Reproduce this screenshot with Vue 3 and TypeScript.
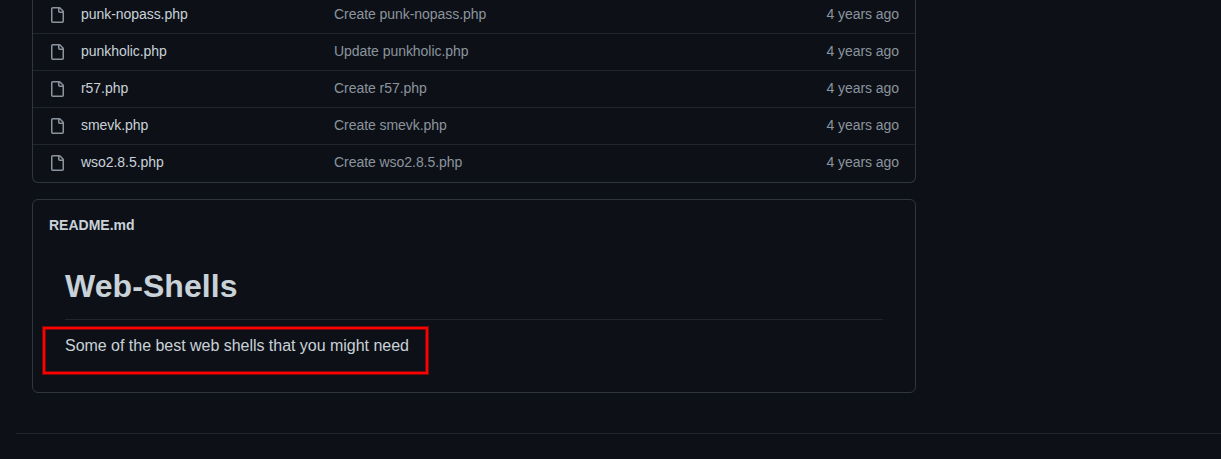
<script setup lang="ts">
interface FileRow {
  name: string
  message: string
  age: string
}

const files: FileRow[] = [
  { name: 'punk-nopass.php', message: 'Create punk-nopass.php', age: '4 years ago' },
  { name: 'punkholic.php', message: 'Update punkholic.php', age: '4 years ago' },
  { name: 'r57.php', message: 'Create r57.php', age: '4 years ago' },
  { name: 'smevk.php', message: 'Create smevk.php', age: '4 years ago' },
  { name: 'wso2.8.5.php', message: 'Create wso2.8.5.php', age: '4 years ago' },
]
</script>

<template>
  <div class="page">
    <main class="content">
      <section class="files">
        <div v-for="file in files" :key="file.name" class="row">
          <svg class="icon" viewBox="0 0 16 16" width="16" height="16" aria-hidden="true">
            <path
              fill-rule="evenodd"
              d="M3.75 1.5a.25.25 0 00-.25.25v12.5c0 .138.112.25.25.25h9.5a.25.25 0 00.25-.25V6h-2.75A1.75 1.75 0 019 4.25V1.5H3.75zm6.75.062V4.25c0 .138.112.25.25.25h2.688a.252.252 0 00-.011-.013l-2.914-2.914a.272.272 0 00-.013-.011zM2 1.75C2 .784 2.784 0 3.75 0h6.586c.464 0 .909.184 1.237.513l2.914 2.914c.329.328.513.773.513 1.237v9.586A1.75 1.75 0 0113.25 16h-9.5A1.75 1.75 0 012 14.25V1.75z"
            />
          </svg>
          <a class="name">{{ file.name }}</a>
          <span class="message">{{ file.message }}</span>
          <span class="age">{{ file.age }}</span>
        </div>
      </section>
      <section class="readme">
        <h2 class="readme-title">README.md</h2>
        <article class="article">
          <h1 class="heading">Web-Shells</h1>
          <p class="intro">
            Some of the best web shells that you might need
            <span class="highlight"></span>
          </p>
        </article>
      </section>
    </main>
    <footer class="footer"></footer>
  </div>
</template>

<style>
body {
  background: #0d1117;
}
</style>

<style scoped>
.page {
  box-sizing: border-box;
  height: 459px;
  overflow: hidden;
  background: #0d1117;
  color: #c9d1d9;
  font-family: "Liberation Sans", Arial, Helvetica, sans-serif;
  font-size: 14px;
  line-height: 20px;
}

.content {
  width: 884px;
  margin-left: 32px;
}

.files,
.readme {
  box-sizing: border-box;
  border: 1px solid #30363d;
}

.files {
  display: flex;
  flex-direction: column;
  justify-content: flex-end;
  height: 183px;
  border-top: 0;
  border-radius: 0 0 6px 6px;
}

.row {
  box-sizing: border-box;
  display: grid;
  flex: none;
  grid-template-columns: 16px 237px 1fr auto;
  column-gap: 16px;
  align-items: center;
  height: 37px;
  padding: 0 16px;
  border-top: 1px solid #21262d;
}

.row:last-child {
  height: 38px;
  padding-bottom: 1px;
}

.icon {
  display: block;
  fill: #8b949e;
}

.name,
.message,
.age {
  padding-bottom: 2px;
  letter-spacing: -0.05px;
}

.message,
.age {
  color: #8b949e;
}

.readme {
  height: 194px;
  margin-top: 16px;
  padding: 15px 16px 0;
  border-radius: 6px;
}

.readme-title {
  margin: 0;
  font-size: 14px;
  line-height: 20px;
}

.article {
  padding: 31px 16px 0;
}

.heading {
  margin: 0 0 14px;
  padding-bottom: 13px;
  border-bottom: 1px solid #21262d;
  font-size: 32px;
  letter-spacing: 0.08px;
  line-height: 40px;
}

.intro {
  position: relative;
  margin: 0;
  font-size: 16px;
  letter-spacing: -0.025px;
  line-height: 24px;
}

.highlight {
  position: absolute;
  top: -7px;
  left: -22px;
  box-sizing: border-box;
  width: 385px;
  height: 47px;
  border: 2px solid #ff0000;
  box-shadow: 0 0 0 1px rgba(255, 0, 0, 0.45), inset 0 0 0 1px rgba(255, 0, 0, 0.45);
}

.footer {
  margin: 40px 0 0 16px;
  border-top: 1px solid #21262d;
}
</style>
